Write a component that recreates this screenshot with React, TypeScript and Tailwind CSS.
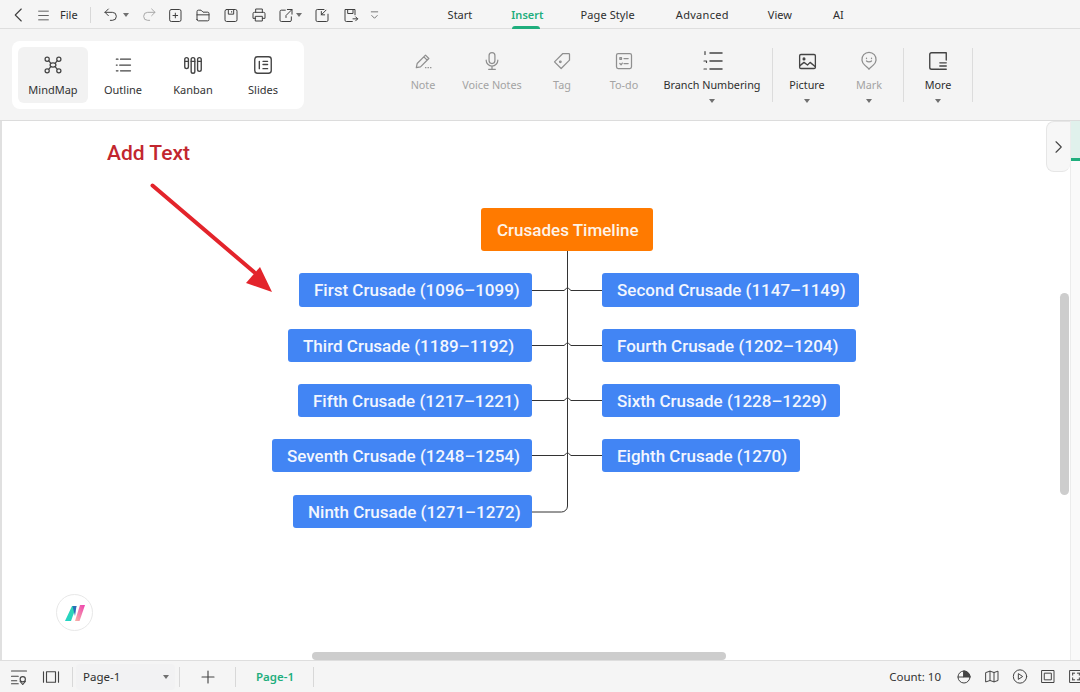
import type { ReactNode } from "react";

const uiFont = "font-['Noto_Sans','Open_Sans',sans-serif]";

function Svg({ size = 18, children, className = "" }: { size?: number; children: ReactNode; className?: string }) {
  return (
    <svg
      width={size}
      height={size}
      viewBox="0 0 24 24"
      fill="none"
      stroke="currentColor"
      strokeWidth={1.5}
      strokeLinecap="round"
      strokeLinejoin="round"
      className={className}
    >
      {children}
    </svg>
  );
}

function Caret({ className = "" }: { className?: string }) {
  return <span className={`block w-0 h-0 border-x-[3.5px] border-x-transparent border-t-[4px] border-t-[#707070] ${className}`} />;
}

function TopIcon({ className, children }: { className: string; children: ReactNode }) {
  return <div className={`flex h-[18px] items-center justify-center text-[#404040] ${className}`}>{children}</div>;
}

function ViewButton({ label, active, icon }: { label: string; active?: boolean; icon: ReactNode }) {
  return (
    <div className={`flex h-[56px] w-[70px] flex-col items-center rounded-md pt-[7px] ${active ? "bg-[#f2f2f2]" : ""}`}>
      <div className="flex h-[22px] items-center text-[#444]">{icon}</div>
      <span className="mt-[7px] text-[11px] leading-[14px] text-[#333]">{label}</span>
    </div>
  );
}

function Tool({
  label,
  className,
  disabled,
  caret,
  icon,
}: {
  label: string;
  className: string;
  disabled?: boolean;
  caret?: boolean;
  icon: ReactNode;
}) {
  return (
    <div className={`flex flex-col items-center ${className}`}>
      <div className={`flex h-[26px] items-center ${disabled ? "text-[#8f8f8f]" : "text-[#444]"}`}>{icon}</div>
      <span className={`mt-[4px] whitespace-nowrap text-[10.8px] leading-[14px] ${disabled ? "text-[#a3a3a3]" : "text-[#2e2e2e]"}`}>
        {label}
      </span>
      {caret && <Caret className="mt-[7px]" />}
    </div>
  );
}

const nodes = [
  { text: "First Crusade (1096–1099)", pos: "left-[299px] top-[152px] w-[233px] h-[34px]" },
  { text: "Second Crusade (1147–1149)", pos: "left-[602px] top-[152px] w-[257px] h-[34px]" },
  { text: "Third Crusade (1189–1192)", pos: "left-[288px] top-[208px] w-[244px] h-[33px]" },
  { text: "Fourth Crusade (1202–1204)", pos: "left-[602px] top-[208px] w-[254px] h-[33px]" },
  { text: "Fifth Crusade (1217–1221)", pos: "left-[298px] top-[263px] w-[234px] h-[33px]" },
  { text: "Sixth Crusade (1228–1229)", pos: "left-[602px] top-[263px] w-[238px] h-[33px]" },
  { text: "Seventh Crusade (1248–1254)", pos: "left-[272px] top-[318px] w-[260px] h-[33px]" },
  { text: "Eighth Crusade (1270)", pos: "left-[602px] top-[318px] w-[198px] h-[33px]" },
  { text: "Ninth Crusade (1271–1272)", pos: "left-[293px] top-[374px] w-[239px] h-[33px]" },
];

export default function App() {
  return (
    <div className={`flex h-[692px] w-[1080px] flex-col overflow-hidden bg-white ${uiFont}`}>
      {/* title row */}
      <div className="flex h-[29px] shrink-0 items-center border-b border-[#dedede] bg-[#f5f5f5] pt-[2px]">
        <TopIcon className="ml-[10px] w-[18px]">
          <Svg size={20}><path d="M15 4l-8 8 8 8" /></Svg>
        </TopIcon>
        <TopIcon className="ml-[6px] w-[18px]">
          <Svg size={13}><path d="M3 4h18M3 12h18M3 20h18" /></Svg>
        </TopIcon>
        <span className="ml-[8px] text-[11px] text-[#2e2e2e]">File</span>
        <div className="ml-[12px] h-[16px] w-px bg-[#d8d8d8]" />
        <TopIcon className="ml-[12px] w-[16px]">
          <Svg size={16}><path d="M8 3L3 8l5 5M3 8h11a6 6 0 0 1 0 12h-3" /></Svg>
        </TopIcon>
        <Caret className="ml-[4px]" />
        <TopIcon className="ml-[12px] w-[16px] text-[#a8a8a8]">
          <Svg size={16}><path d="M16 3l5 5-5 5M21 8H10a6 6 0 0 0 0 12h3" /></Svg>
        </TopIcon>
        <TopIcon className="ml-[10px] w-[16px]">
          <Svg size={17}><rect x="4" y="3" width="17" height="18" rx="2.5" /><path d="M12.5 8.500v7M9 12h7" /></Svg>
        </TopIcon>
        <TopIcon className="ml-[12px] w-[16px]">
          <Svg size={17}><path d="M3 18V6a2 2 0 0 1 2-2h4l3 3h7a2 2 0 0 1 2 2v9a2 2 0 0 1-2 2H5a2 2 0 0 1-2-2zM3 11h18" /></Svg>
        </TopIcon>
        <TopIcon className="ml-[12px] w-[16px]">
          <Svg size={17}><rect x="3" y="3" width="18" height="18" rx="2.5" /><path d="M8 3v7h8V3M13 6v1" /></Svg>
        </TopIcon>
        <TopIcon className="ml-[12px] w-[16px]">
          <Svg size={18}><path d="M7 8V3h10v5M7 17H3V10a2 2 0 0 1 2-2h14a2 2 0 0 1 2 2v7h-4" /><rect x="7" y="14" width="10" height="7" /></Svg>
        </TopIcon>
        <TopIcon className="ml-[11px] w-[16px]">
          <Svg size={17}><path d="M11 4H5a2 2 0 0 0-2 2v13a2 2 0 0 0 2 2h13a2 2 0 0 0 2-2v-5M14 3h7v7M21 3l-9 9v3" /></Svg>
        </TopIcon>
        <Caret className="ml-[2px]" />
        <TopIcon className="ml-[12px] w-[16px]">
          <Svg size={17}><path d="M21 10v9a2 2 0 0 1-2 2H5a2 2 0 0 1-2-2V5a2 2 0 0 1 2-2h10M18 4l-7 7M11 6v5h5" /></Svg>
        </TopIcon>
        <TopIcon className="ml-[13px] w-[16px]">
          <Svg size={17}><path d="M14 21H5a2 2 0 0 1-2-2V3h15v8M7 3v6h8V3M15 17h7M19 14l3 3-3 3" /></Svg>
        </TopIcon>
        <TopIcon className="ml-[8px] w-[16px] text-[#555]">
          <Svg size={11}><path d="M5 4h14M6 12l6 6 6-6" /></Svg>
        </TopIcon>

        {/* tabs */}
        <div className="relative ml-[65px] flex h-full items-center text-[11px] text-[#2e2e2e]">
          <span>Start</span>
          <span className="relative ml-[39px] font-semibold text-[#1fae7d]">
            Insert
            <span className="absolute -bottom-[6px] left-[1px] h-[3px] w-[28px] rounded-t bg-[#1fae7d]" />
          </span>
          <span className="ml-[37px] tracking-[0.1px]">Page Style</span>
          <span className="ml-[41px] tracking-[0.3px]">Advanced</span>
          <span className="ml-[39px]">View</span>
          <span className="ml-[41px]">AI</span>
        </div>
      </div>

      {/* ribbon */}
      <div className="relative flex h-[92px] shrink-0 items-start border-b border-[#dcdcdc] bg-[#f4f4f4]">
        <div className="ml-[12px] mt-[12px] flex h-[68px] w-[292px] items-center rounded-lg bg-white px-[6px]">
          <ViewButton
            active
            label="MindMap"
            icon={
              <Svg size={20}>
                <circle cx="5" cy="5" r="2.5" /><circle cx="19" cy="5" r="2.5" /><circle cx="5" cy="19" r="2.5" /><circle cx="19" cy="19" r="2.5" />
                <ellipse cx="12" cy="12" rx="3.5" ry="2.5" />
                <path d="M7 7l2.5 3M17 7l-2.5 3M7 17l2.5-3M17 17l-2.5-3" />
              </Svg>
            }
          />
          <ViewButton
            label="Outline"
            icon={<Svg size={20}><path d="M4 5h2M9 5h12M8 12h13M4 19h2M9 19h12M4 12h1" /></Svg>}
          />
          <ViewButton
            label="Kanban"
            icon={
              <Svg size={22}>
                <rect x="3" y="4" width="4" height="12" rx="2" /><rect x="10" y="4" width="4" height="17" rx="2" /><rect x="17" y="4" width="4" height="15" rx="2" />
                <path d="M3 8h4M10 8h4M17 8h4" />
              </Svg>
            }
          />
          <ViewButton
            label="Slides"
            icon={<Svg size={22}><rect x="3" y="3" width="18" height="18" rx="3" /><path d="M8 8v8M12 8h5M12 11.500h5M12 16h5" /></Svg>}
          />
        </div>

        <div className="ml-[99px] mt-[19px] flex h-[70px] items-start">
          <Tool label="Note" disabled className="w-[40px]" icon={<Svg size={20}><path d="M4 20l1-5L15 5l4 4L9 19l-5 1zM13 7l4 4M15 20h.5M18 20h.5M21 20h.5" /></Svg>} />
          <Tool label="Voice Notes" disabled className="ml-[9px] w-[80px]" icon={<Svg size={20}><rect x="8.500" y="2" width="7" height="13" rx="3.500" /><path d="M5 11a7 7 0 0 0 14 0M12 18v4M8 22h8" /></Svg>} />
          <Tool label="Tag" disabled className="ml-0 w-[60px]" icon={<Svg size={20}><path d="M13 3h7a1 1 0 0 1 1 1v7L11 21l-8-8L13 3z" /><circle cx="10" cy="13" r="1" /></Svg>} />
          <Tool label="To-do" disabled className="ml-[2px] w-[60px]" icon={<Svg size={20}><rect x="3" y="3" width="18" height="18" rx="2" /><path d="M7 8h2v2H7zM12 9h5M7 15l1.500 1.500L10 14.500M12 15h5" /></Svg>} />
          <Tool
            label="Branch Numbering"
            caret
            className="ml-0 w-[116px]"
            icon={
              <Svg size={24}>
                <path d="M10 4h12M10 12h12M10 20h12" />
                <path d="M5 2.500v3M4 12h2.500v1.500M4 20h2.500" strokeWidth={1.2} />
              </Svg>
            }
          />
          <div className="ml-[2px] h-[54px] w-px bg-[#dcdcdc]" />
          <Tool
            label="Picture"
            caret
            className="ml-[4px] w-[60px]"
            icon={<Svg size={21}><rect x="3" y="4" width="18" height="16" rx="1.500" /><circle cx="8" cy="9" r="1" /><path d="M3 17l5-4 4 3 3-3 6 5" /></Svg>}
          />
          <Tool
            label="Mark"
            disabled
            caret
            className="ml-[2px] w-[60px]"
            icon={<Svg size={20}><path d="M12 22c-1-2-3-3-5-5a8.500 8.500 0 1 1 10 0c-2 2-4 3-5 5z" /><path d="M9 8.500v.5M15 8.500v.5M9 12c1.500 1.500 4.500 1.500 6 0" /></Svg>}
          />
          <div className="ml-[4px] h-[54px] w-px bg-[#dcdcdc]" />
          <Tool
            label="More"
            caret
            className="ml-[4px] w-[60px]"
            icon={<Svg size={22}><path d="M21 11V3H5a2 2 0 0 0-2 2v14a2 2 0 0 0 2 2h8M14 14h7M14 17.500h7M14 21h7" /></Svg>}
          />
          <div className="ml-[4px] h-[54px] w-px bg-[#dcdcdc]" />
        </div>
      </div>

      {/* canvas */}
      <div className="relative flex-1 border-l-2 border-[#e0e0e0] bg-white">
        <div className="absolute left-[105px] top-[19px] font-['Roboto',sans-serif] text-[21px] font-medium leading-[26px] text-[#c2262e]">
          Add Text
        </div>

        <svg className="absolute -left-[2px] top-0" width="1080" height="539" fill="none">
          {/* red arrow */}
          <path d="M152.500 64.500L254 151" stroke="#e3242b" strokeWidth="4" strokeLinecap="round" />
          <path d="M272 171L246 162L260 146Z" fill="#e3242b" />
          {/* connectors */}
          <g stroke="#333" strokeWidth="1">
            <path d="M567.500 130V385a6 6 0 0 1-6 6H532" />
            <path d="M532 169.500H564q3.500-3 3.500-3q0 0 3.500 3H602" />
            <path d="M532 224.500H564q3.500-3 3.500-3q0 0 3.500 3H602" />
            <path d="M532 279.500H564q3.500-3 3.500-3q0 0 3.500 3H602" />
            <path d="M532 334.500H564q3.500-3 3.500-3q0 0 3.500 3H602" />
          </g>
        </svg>

        <div className="absolute left-[479px] top-[87px] flex h-[43px] w-[172px] items-center justify-start rounded-[3px] bg-[#ff7a00] pl-[16px] pt-[2px] font-['Roboto',sans-serif] text-[17px] font-medium text-[#fdf3e8]">
          Crusades Timeline
        </div>
        {nodes.map((n) => (
          <div
            key={n.text}
            className={`absolute -ml-[2px] flex items-center justify-start whitespace-nowrap rounded-[3px] bg-[#4285f4] pl-[15px] pt-[2px] font-['Roboto',sans-serif] text-[17px] font-medium text-[#f2f6fe] ${n.pos}`}
          >
            {n.text}
          </div>
        ))}

        {/* logo */}
        <div className="absolute left-[54px] top-[473px] flex h-[37px] w-[37px] items-center justify-center rounded-full border border-[#e8e8e8] bg-white">
          <svg width="20" height="16" viewBox="0 0 20 16">
            <defs>
              <linearGradient id="logoTeal" x1="0" y1="1" x2="1" y2="0">
                <stop offset="0" stopColor="#22d3c5" />
                <stop offset="1" stopColor="#34d6b0" />
              </linearGradient>
              <linearGradient id="logoPink" x1="0" y1="1" x2="1" y2="0">
                <stop offset="0" stopColor="#f7b6a6" />
                <stop offset="1" stopColor="#ee3fb0" />
              </linearGradient>
            </defs>
            <path d="M0 16L7 1h4.500L6 16z" fill="url(#logoTeal)" />
            <path d="M7.500 1h4L10 11z" fill="#2b6cb8" />
            <path d="M10 16L15 0h5L14.500 16z" fill="url(#logoPink)" />
          </svg>
        </div>

        {/* side panel edge */}
        <div className="absolute right-0 top-0 h-full w-[10px] border-l border-[#ececec] bg-[#fafafa]">
          <div className="h-[40px] border-b-[3px] border-[#1fae7d] bg-[#e0f1ec]" />
        </div>
        <div className="absolute right-[10px] top-0 flex h-[51px] w-[24px] items-center justify-center rounded-l-lg rounded-br-lg border border-r-0 border-[#e6e6e6] bg-[#f7f7f7] text-[#444]">
          <Svg size={18}><path d="M8 5l7 7-7 7" /></Svg>
        </div>

        {/* scrollbars */}
        <div className="absolute left-[1058px] top-[172px] h-[202px] w-[9px] rounded-full bg-[#cdcdcd]" />
        <div className="absolute bottom-0 left-[310px] h-[8px] w-[414px] rounded-full bg-[#cdcdcd]" />
      </div>

      {/* status bar */}
      <div className="flex h-[32px] shrink-0 items-center border-t border-[#dedede] bg-[#f5f5f5] text-[#444]">
        <div className="ml-[10px] flex w-[18px] justify-center">
          <Svg size={18}><path d="M2 4h20M2 11h9M2 17h7M2 21h9" /><circle cx="17" cy="15" r="3.500" /><path d="M17 22l-3.500-4M17 22l3.500-4" /></Svg>
        </div>
        <div className="ml-[14px] flex w-[18px] justify-center">
          <Svg size={18}><rect x="6" y="5" width="12" height="14" /><path d="M2 5v14M22 5v14" /></Svg>
        </div>
        <div className="ml-[12px] h-[20px] w-px bg-[#d8d8d8]" />
        <div className="ml-[3px] flex h-[26px] w-[99px] items-center rounded bg-[#f2f2f3] pl-[7px] pr-[6px]">
          <span className="flex-1 pt-[1px] text-[11.5px] text-[#2e2e2e]">Page-1</span>
          <Caret />
        </div>
        <div className="ml-[4px] h-[20px] w-px bg-[#d8d8d8]" />
        <div className="ml-[19px] flex w-[18px] justify-center">
          <Svg size={18}><path d="M12 4v16M4 12h16" /></Svg>
        </div>
        <div className="ml-[18px] h-[20px] w-px bg-[#d8d8d8]" />
        <span className="ml-[20px] pt-[1px] text-[11.5px] font-semibold text-[#1fae7d]">Page-1</span>
        <div className="ml-[19px] h-[20px] w-px bg-[#d8d8d8]" />
        <span className="ml-auto pt-[1px] text-[11.5px] text-[#333]">Count: 10</span>
        <div className="ml-[15px] flex w-[16px] justify-center">
          <Svg size={16}><circle cx="12" cy="12" r="9" /><path d="M3 12h9V3" /><path d="M12 3a9 9 0 0 1 9 9h-9z" fill="currentColor" /></Svg>
        </div>
        <div className="ml-[12px] flex w-[16px] justify-center">
          <Svg size={17}><path d="M3 6l6-2 6 2 6-2v14l-6 2-6-2-6 2zM9 4v14M15 6v14" /></Svg>
        </div>
        <div className="ml-[12px] flex w-[16px] justify-center">
          <Svg size={17}><circle cx="12" cy="12" r="10" /><path d="M10 8l6 4-6 4z" /></Svg>
        </div>
        <div className="ml-[12px] flex w-[16px] justify-center">
          <Svg size={17}><rect x="3" y="3" width="18" height="18" /><rect x="7" y="7" width="10" height="10" /></Svg>
        </div>
        <div className="ml-[12px] mr-[-4px] flex w-[16px] justify-center">
          <Svg size={17}><rect x="3" y="3" width="18" height="18" /><path d="M7 7h3M7 7v3M17 7h-3M17 7v3M7 17h3M7 17v-3M17 17h-3M17 17v-3" /></Svg>
        </div>
      </div>
    </div>
  );
}
